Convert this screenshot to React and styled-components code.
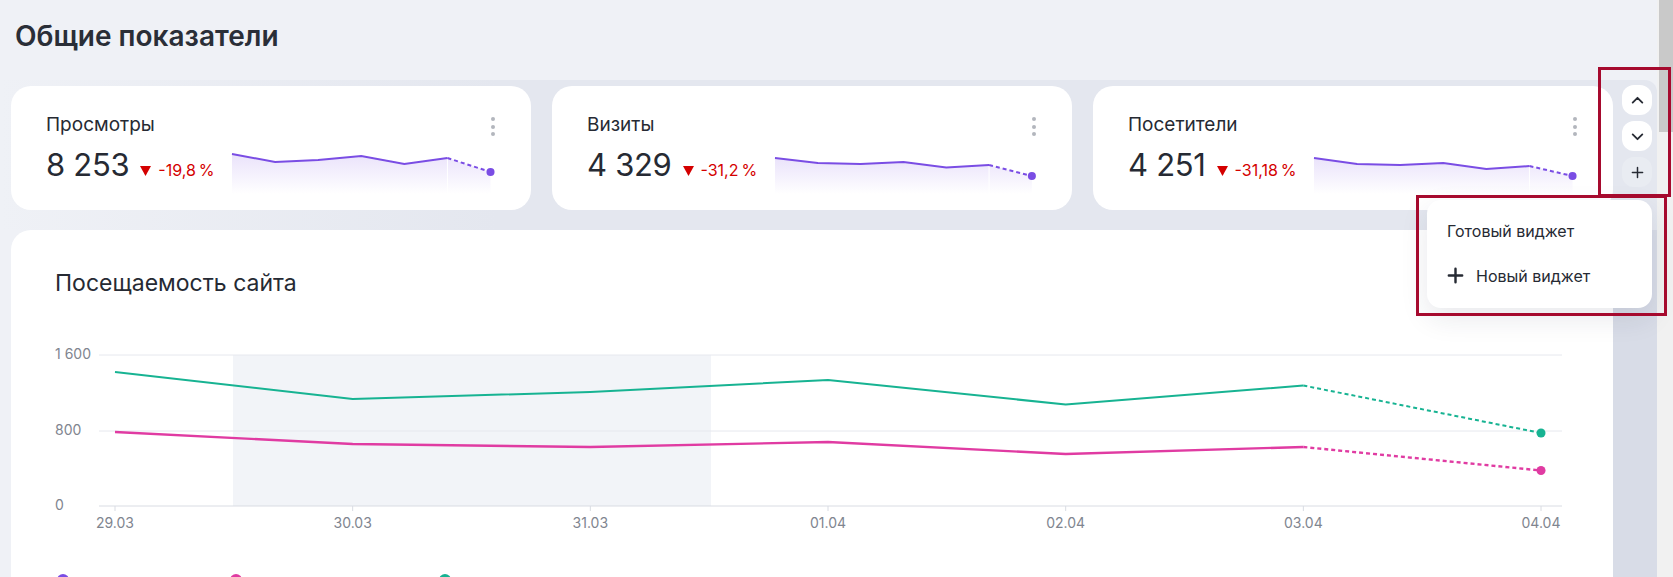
import React from 'react'
import styled, { createGlobalStyle } from 'styled-components'

const GlobalStyle = createGlobalStyle`
  html, body { margin: 0; padding: 0; }
  body {
    background: #eff1f6;
    font-family: Inter, "Noto Sans", Arial, sans-serif;
    color: #262a33;
    overflow: hidden;
  }
  * { box-sizing: border-box; }
`

const Page = styled.div`
  display: flex;
  height: 100vh;
  overflow: hidden;
`

const Main = styled.div`
  flex: 1;
  min-width: 0;
  display: flex;
  flex-direction: column;
`

const Heading = styled.h1`
  margin: 19px 0 0 15px;
  font-size: 28px;
  line-height: 34px;
  font-weight: 600;
  color: #2a2e37;
`

const Band = styled.div`
  position: relative;
  margin-top: 27px;
  display: flex;
  align-items: flex-start;
  padding: 6px 0 20px 11px;
  background: linear-gradient(90deg, rgba(228, 231, 239, 0) 0, #e4e7ef 30%);
  border-top-right-radius: 12px;
`

const Cards = styled.div`
  flex: 1;
  display: grid;
  grid-template-columns: repeat(3, 1fr);
  gap: 21px;
`

const Card = styled.div`
  height: 124px;
  background: #fff;
  border-radius: 20px;
  padding: 27px 36px 0 35px;
`

const CardHeader = styled.div`
  display: flex;
  justify-content: space-between;
  align-items: flex-start;
`

const CardTitle = styled.div`
  font-size: 19px;
  line-height: 24px;
  color: #262a33;
`

const Kebab = styled.div`
  display: flex;
  flex-direction: column;
  gap: 3.5px;
  padding-top: 4px;
  span {
    width: 4px;
    height: 4px;
    border-radius: 50%;
    background: #b3b6bd;
  }
`

const ValueRow = styled.div`
  display: flex;
  align-items: flex-start;
  margin-top: 9px;
`

const ValueGroup = styled.div`
  display: flex;
  align-items: baseline;
  gap: 11px;
`

const Number = styled.div`
  font-size: 31px;
  line-height: 38px;
  color: #262a33;
  letter-spacing: -0.3px;
`

const Delta = styled.div`
  display: flex;
  align-items: baseline;
  gap: 7px;
  font-size: 16px;
  color: #d40000;
  white-space: nowrap;
`

const SparkWrap = styled.div`
  flex: 1;
  min-width: 0;
  height: 44px;
  margin: 4px 0 0 18px;
  svg { display: block; width: 100%; height: 100%; overflow: visible; }
`

const Tools = styled.div`
  width: 44px;
  margin-top: -1px;
  padding-left: 4px;
  display: flex;
  flex-direction: column;
  align-items: center;
  gap: 6px;
`

const ToolButton = styled.button`
  width: 30px;
  height: 30px;
  border: none;
  border-radius: 12px;
  padding: 0;
  display: flex;
  align-items: center;
  justify-content: center;
  background: ${({ $muted }) => ($muted ? '#e9ecf2' : '#fff')};
  color: #262a33;
`

const Menu = styled.div`
  position: absolute;
  left: 1427px;
  top: 120px;
  width: 225px;
  height: 108px;
  padding-top: 8px;
  background: #fff;
  border-radius: 14px;
  box-shadow: 0 10px 28px rgba(30, 40, 70, 0.1);
  z-index: 3;
`

const MenuItem = styled.div`
  height: 45px;
  padding: 0 20px;
  display: flex;
  align-items: center;
  gap: 12px;
  font-size: 16px;
  color: #262a33;
`

const Highlight = styled.div`
  position: absolute;
  left: ${({ $x }) => $x}px;
  top: ${({ $y }) => $y}px;
  width: ${({ $w }) => $w}px;
  height: ${({ $h }) => $h}px;
  border: 3px solid #a60a2e;
  pointer-events: none;
  z-index: 4;
`

const Section = styled.div`
  flex: 1;
  display: flex;
`

const ChartCard = styled.div`
  flex: 1;
  margin-left: 11px;
  background: #fff;
  border-radius: 20px 20px 0 0;
  padding: 39px 0 0 44px;
`

const ChartTitle = styled.h2`
  margin: 0;
  font-size: 23px;
  line-height: 28px;
  font-weight: 400;
  color: #262a33;
`

const ChartSvg = styled.svg`
  display: block;
  margin-top: 43px;
  font-family: Inter, "Noto Sans", Arial, sans-serif;
`

const Legend = styled.div`
  margin-top: 34px;
  padding-left: 2px;
  display: grid;
  grid-template-columns: 173px 209px auto;
`

const LegendDot = styled.div`
  width: 12px;
  height: 12px;
  border-radius: 50%;
  background: ${({ $color }) => $color};
`

const SideColumn = styled.div`
  width: 44px;
  background: #d8dce7;
`

const Scrollbar = styled.div`
  width: 16px;
  flex-shrink: 0;
  background: #f1f1f1;
  padding-left: 2px;
`

const Thumb = styled.div`
  width: 14px;
  height: 132px;
  background: #c9c9c9;
`

const PURPLE = '#7a4de4'
const GREEN = '#17b392'
const PINK = '#e03ba2'

const metrics = [
  { id: 'views', title: 'Просмотры', value: '8 253', delta: '-19,8\u202F%', spark: [4, 12, 10, 6, 14, 8, 22] },
  { id: 'visits', title: 'Визиты', value: '4 329', delta: '-31,2\u202F%', spark: [8, 13, 14, 12, 17.5, 15, 26] },
  { id: 'visitors', title: 'Посетители', value: '4 251', delta: '-31,18\u202F%', spark: [8, 14, 15, 13, 19, 16, 26] },
]

const Spark = ({ id, points }) => {
  const step = 256 / (points.length - 1)
  const pts = points.map((y, i) => [i * step, y])
  const solid = pts.slice(0, -1).map((p) => p.join(',')).join(' ')
  const [lx, ly] = pts[pts.length - 1]
  const [px, py] = pts[pts.length - 2]
  const area = `0,44 ${pts.map((p) => p.join(',')).join(' ')} ${lx},44`
  return (
    <SparkWrap>
      <svg viewBox="0 0 260 44" preserveAspectRatio="none">
        <defs>
          <linearGradient id={`fill-${id}`} x1="0" y1="0" x2="0" y2="1">
            <stop offset="0" stopColor={PURPLE} stopOpacity="0.16" />
            <stop offset="1" stopColor={PURPLE} stopOpacity="0" />
          </linearGradient>
        </defs>
        <polygon points={area} fill={`url(#fill-${id})`} />
        <line x1={px} y1="0" x2={px} y2="44" stroke="#fff" strokeWidth="1" vectorEffect="non-scaling-stroke" />
        <polyline points={solid} fill="none" stroke={PURPLE} strokeWidth="2" vectorEffect="non-scaling-stroke" />
        <line x1={px} y1={py} x2={lx} y2={ly} stroke={PURPLE} strokeWidth="2" strokeDasharray="4 3" vectorEffect="non-scaling-stroke" />
        <circle cx={lx} cy={ly} r="4" fill={PURPLE} />
      </svg>
    </SparkWrap>
  )
}

const DownTriangle = () => (
  <svg width="11" height="10" viewBox="0 0 11 10">
    <path d="M0 0 H11 L5.5 10 Z" fill="#d40000" />
  </svg>
)

const MetricCard = ({ metric }) => (
  <Card>
    <CardHeader>
      <CardTitle>{metric.title}</CardTitle>
      <Kebab><span /><span /><span /></Kebab>
    </CardHeader>
    <ValueRow>
      <ValueGroup>
        <Number>{metric.value}</Number>
        <Delta><DownTriangle />{metric.delta}</Delta>
      </ValueGroup>
      <Spark id={metric.id} points={metric.spark} />
    </ValueRow>
  </Card>
)

const Chevron = ({ up }) => (
  <svg width="15" height="15" viewBox="0 0 14 14" fill="none" stroke="currentColor" strokeWidth="1.7" strokeLinecap="round" strokeLinejoin="round">
    <path d={up ? 'M2.5 9 L7 4.5 L11.5 9' : 'M2.5 5 L7 9.5 L11.5 5'} />
  </svg>
)

const Plus = ({ size = 14, width = 1.6 }) => (
  <svg width={size} height={size} viewBox="0 0 14 14" fill="none" stroke="currentColor" strokeWidth={width} strokeLinecap="round">
    <path d="M7 1.5 V12.5 M1.5 7 H12.5" />
  </svg>
)

const days = ['29.03', '30.03', '31.03', '01.04', '02.04', '03.04', '04.04']
const green = [32, 59, 52, 40, 64.5, 45.5, 93]
const pink = [92, 104, 107, 102, 114, 107, 130.5]
const X = (i) => 60 + i * 237.67

const Series = ({ values, color, width }) => {
  const n = values.length
  const solid = values.slice(0, -1).map((y, i) => `${X(i)},${y}`).join(' ')
  return (
    <g>
      <polyline points={solid} fill="none" stroke={color} strokeWidth={width} strokeLinejoin="round" />
      <line x1={X(n - 2)} y1={values[n - 2]} x2={X(n - 1)} y2={values[n - 1]} stroke={color} strokeWidth={width} strokeDasharray="4 3" />
      <circle cx={X(n - 1)} cy={values[n - 1]} r="4.5" fill={color} />
    </g>
  )
}

const TrafficChart = () => (
  <ChartSvg width="1520" height="200" viewBox="0 0 1520 200">
    <rect x="178" y="15" width="478" height="151" fill="#f2f4f8" />
    <line x1="44" y1="15" x2="1507" y2="15" stroke="#e6e8ee" />
    <line x1="44" y1="91" x2="1507" y2="91" stroke="#e6e8ee" />
    <line x1="44" y1="166" x2="1507" y2="166" stroke="#d9dce3" />
    {[['1 600', 15], ['800', 91], ['0', 166]].map(([t, y]) => (
      <text key={t} x="0" y={y} dominantBaseline="middle" fontSize="14" fill="#80858f">{t}</text>
    ))}
    {days.map((d, i) => (
      <g key={d}>
        <line x1={X(i)} y1="166" x2={X(i)} y2="171" stroke="#d9dce3" />
        <text x={X(i)} y="184" textAnchor="middle" dominantBaseline="middle" fontSize="14" fill="#80858f">{d}</text>
      </g>
    ))}
    <Series values={green} color={GREEN} width={2} />
    <Series values={pink} color={PINK} width={2.4} />
  </ChartSvg>
)

export default function App() {
  return (
    <>
      <GlobalStyle />
      <Page>
        <Main>
          <Heading>Общие показатели</Heading>
          <Band>
            <Cards>
              {metrics.map((m) => <MetricCard key={m.id} metric={m} />)}
            </Cards>
            <Tools>
              <ToolButton><Chevron up /></ToolButton>
              <ToolButton><Chevron /></ToolButton>
              <ToolButton $muted><Plus size={13} /></ToolButton>
            </Tools>
            <Menu>
              <MenuItem>Готовый виджет</MenuItem>
              <MenuItem><Plus size={17} width={2} />Новый виджет</MenuItem>
            </Menu>
            <Highlight $x={1598} $y={-13} $w={73} $h={130} />
            <Highlight $x={1416} $y={115} $w={251} $h={121} />
          </Band>
          <Section>
            <ChartCard>
              <ChartTitle>Посещаемость сайта</ChartTitle>
              <TrafficChart />
              <Legend>
                <LegendDot $color={PURPLE} />
                <LegendDot $color={PINK} />
                <LegendDot $color={GREEN} />
              </Legend>
            </ChartCard>
            <SideColumn />
          </Section>
        </Main>
        <Scrollbar><Thumb /></Scrollbar>
      </Page>
    </>
  )
}
